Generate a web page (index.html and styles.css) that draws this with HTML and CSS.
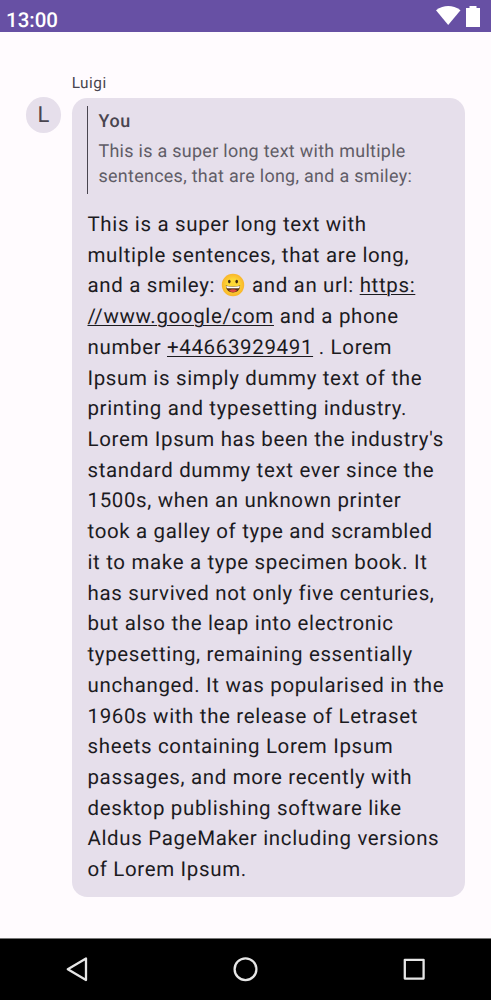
FILE: index.html
```html
<!DOCTYPE html>
<html lang="en"><head><meta charset="utf-8"><title>Conversation</title><link rel="stylesheet" href="styles.css"></head>
<body>
<header class="status"><span class="clock">13:00</span>
<svg class="status-icons" width="48" height="32" viewBox="0 0 48 32"><path d="M2 10.2Q14.200 1.800 26.500 10.200L14.200 25Z" fill="#fff"/><path d="M32 8h3.500V6h7v2H46v19H32Z" fill="#fff"/></svg></header>
<main class="chat">
<div class="avatar">L</div>
<section class="message">
<div class="sender">Luigi</div>
<article class="bubble">
<blockquote class="quote"><div class="quote-name">You</div><div class="quote-text">This is a super long text with multiple<br>sentences, that are long, and a smiley:</div></blockquote>
<p class="body">This is a super long text with<br>multiple sentences, that are long,<br>and a smiley: <span class="emoji"><svg width="24" height="24" viewBox="0 0 24 24"><defs><radialGradient id="face"><stop offset=".5" stop-color="#fdd835"/><stop offset="1" stop-color="#f9b52b"/></radialGradient></defs><circle cx="12" cy="12" r="11.200" fill="url(#face)"/><ellipse cx="8.300" cy="8.600" rx="1.300" ry="1.800" fill="#422b0d"/><ellipse cx="15.700" cy="8.600" rx="1.300" ry="1.800" fill="#422b0d"/><path d="M4.800 12.500Q12 14.500 19.200 12.500Q18.500 19.500 12 19.500T4.800 12.500Z" fill="#5b3415"/><path d="M8 17.500Q12 14.800 16 17.500Q14.500 19.300 12 19.300T8 17.500Z" fill="#e0483e"/><path d="M5.200 13Q12 14.600 18.800 13Q18.500 15.200 17.500 15.200H6.500Q5.500 15.200 5.200 13Z" fill="#fff"/></svg></span> and an url: <a>https:</a><br><a>//www.google/com</a> and a phone<br>number <a>+44663929491</a> . Lorem<br>Ipsum is simply dummy text of the<br>printing and typesetting industry.<br>Lorem Ipsum has been the industry's<br>standard dummy text ever since the<br>1500s, when an unknown printer<br>took a galley of type and scrambled<br>it to make a type specimen book. It<br>has survived not only five centuries,<br>but also the leap into electronic<br>typesetting, remaining essentially<br>unchanged. It was popularised in the<br>1960s with the release of Letraset<br>sheets containing Lorem Ipsum<br>passages, and more recently with<br>desktop publishing software like<br>Aldus PageMaker including versions<br>of Lorem Ipsum.</p>
</article></section></main>
<nav class="navbar"><svg width="491" height="61" viewBox="0 0 491 61" fill="none" stroke="#e6e6e6" stroke-width="2.300" stroke-linejoin="round"><path d="M86 19.500v21.500L67.800 30.200Z"/><circle cx="245.500" cy="30.200" r="10.900"/><path d="M404.800 20.800h18.800v18.800h-18.800Z"/></svg></nav>
</body></html>
```

FILE: styles.css
```css
* { box-sizing: border-box; }
body { margin: 0; height: 1000px; display: flex; flex-direction: column; background: #fffbfe; color: #1c1b1f; font-family: Roboto, sans-serif; text-rendering: geometricPrecision; overflow: hidden; }
.status { height: 32px; flex: none; background: #6750a4; color: #fff; display: flex; justify-content: space-between; padding: 0 9px 0 6px; }
.clock { font-size: 20.480px; font-weight: 500; line-height: 40px; }
.status-icons { display: block; }
.chat { flex: 1; display: flex; padding: 41px 26px 0 25.600px; }
.avatar { width: 35.840px; height: 35.840px; margin: 24px 10.260px 0 0; flex: none; border-radius: 50%; background: #e6dfeb; color: #49454f; font-size: 22px; line-height: 38px; text-align: center; }
.message { width: 393.600px; flex: none; }
.sender { height: 25px; font-size: 15.360px; line-height: 20px; letter-spacing: .510px; color: #49454f; }
.bubble { height: 799px; border-radius: 15.360px; background: #e6dfeb; padding: 8px 10px 0 15.300px; }
.quote { margin: 0; height: 88px; border-left: 1px solid #49454f; padding: 2px 0 0 10.500px; color: #605c66; white-space: nowrap; }
.quote-name { font-size: 17.920px; font-weight: 500; line-height: 27px; letter-spacing: .640px; color: #49454f; }
.quote-text { font-size: 17.920px; line-height: 25.600px; padding-top: 3.600px; letter-spacing: .300px; }
.body { margin: 15px 0 0 .500px; font-size: 20.480px; line-height: 30.720px; letter-spacing: .660px; white-space: nowrap; }
.body a { text-decoration: underline; text-decoration-thickness: 1px; text-underline-offset: 2px; }
.emoji { display: inline-block; width: 25.300px; height: 24px; vertical-align: -5px; line-height: 0; }
.navbar { height: 62px; flex: none; background: #000; border-top: 1px solid #777; }
.navbar svg { display: block; }
```
